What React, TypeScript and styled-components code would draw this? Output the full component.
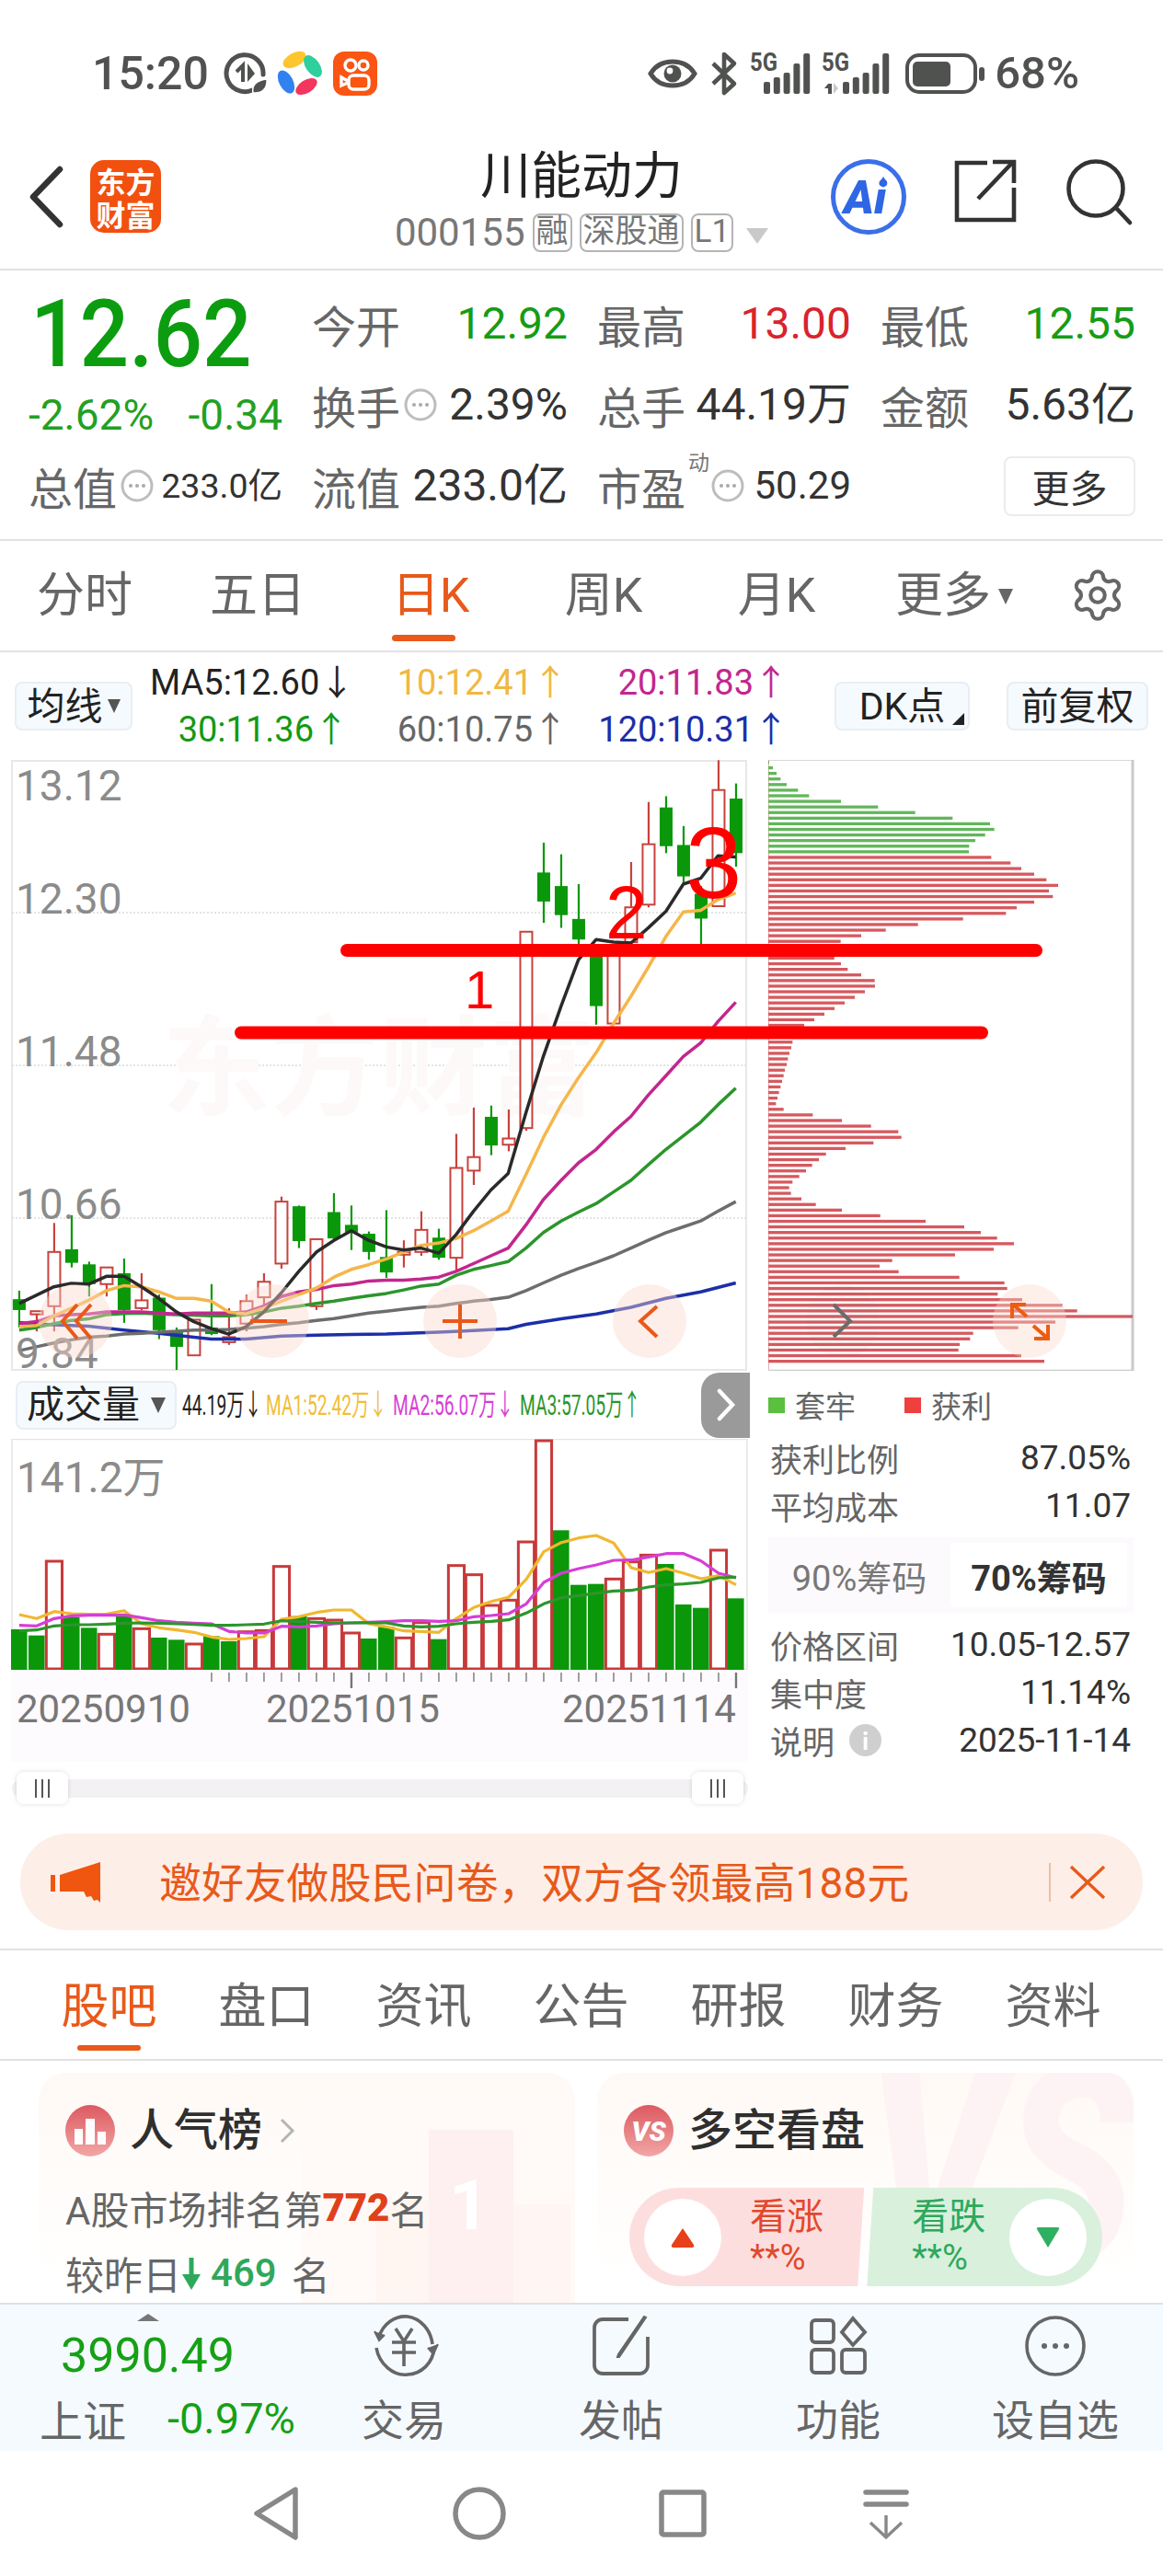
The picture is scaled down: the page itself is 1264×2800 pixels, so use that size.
import React from "react";
import styled, { createGlobalStyle } from "styled-components";
import { Settings } from "lucide-react";

const Global = createGlobalStyle`
  html, body { margin: 0; padding: 0; background: #fff; }
  body { font-family: Roboto, "Noto Sans CJK SC", sans-serif; }
  * { box-sizing: border-box; }
`;

const ORANGE = "#e8591a";
const GRAY = "#666";
const DARK = "#333";
const UP = "#d9232e";

const Page = styled.div`
  width: 1264px;
  height: 2800px;
  overflow: hidden;
  display: flex;
  flex-direction: column;
  background: #fff;
`;

const Glyph = styled.svg<{ $ml?: number; $mt?: number }>`
  display: block;
  flex: none;
  overflow: visible;
  margin-left: ${(p) => p.$ml ?? 0}px;
  margin-top: ${(p) => p.$mt ?? 0}px;
`;

/* status bar */
const StatusBar = styled.div`
  height: 160px;
  display: flex;
  align-items: center;
  padding: 0 91px 0 100px;
  color: #505250;
`;
const Clock = styled.span`
  font-size: 50px;
  font-weight: 500;
  line-height: 60px;
  margin-right: 17px;
`;
const StatusRight = styled.div`
  margin-left: auto;
  display: flex;
  align-items: center;
`;
const Percent = styled.span`
  font-size: 49px;
  font-weight: 500;
  line-height: 60px;
  margin-left: 9px;
`;

/* header */
const Header = styled.div`
  height: 134px;
  display: grid;
  grid-template-columns: 1fr auto 1fr;
  border-bottom: 2px solid #e2e2e2;
`;
const HeaderLeft = styled.div`
  display: flex;
  align-items: flex-start;
  padding: 14px 0 0 32px;
  gap: 30px;
`;
const HeaderRight = styled.div`
  display: flex;
  justify-content: flex-end;
  align-items: flex-start;
  padding: 12px 34px 0 0;
`;
const Logo = styled.div`
  width: 77px;
  height: 79px;
  border-radius: 15px;
  background: #f2500f;
  color: #fff;
  font-size: 32px;
  line-height: 36px;
  font-weight: 700;
  display: flex;
  flex-direction: column;
  align-items: center;
  justify-content: center;
  font-family: "Noto Sans CJK SC", sans-serif;
`;
const TitleCol = styled.div`
  display: flex;
  flex-direction: column;
  align-items: center;
`;
const Title = styled.div`
  font-size: 55px;
  line-height: 52px;
  color: #222;
  font-family: "Noto Sans CJK SC", sans-serif;
  font-weight: 400;
`;
const CodeRow = styled.div`
  margin-top: 20px;
  display: flex;
  align-items: center;
  gap: 8px;
  color: #777;
`;
const Code = styled.span`
  font-size: 42px;
  line-height: 42px;
`;
const Badge = styled.span`
  height: 42px;
  border: 2px solid #b4b4b4;
  border-radius: 8px;
  padding: 0 2px;
  font-size: 35px;
  line-height: 36px;
  color: #777;
  white-space: nowrap;
  font-family: Roboto, "Noto Sans CJK SC", sans-serif;
`;
const CodeArrow = styled.span`
  width: 0;
  height: 0;
  margin: 6px 0 0 6px;
  border-left: 12px solid transparent;
  border-right: 12px solid transparent;
  border-top: 17px solid #c9c9c9;
`;
const IconSlot = styled.div<{ $gap: number }>`
  margin-left: ${(p) => p.$gap}px;
  display: flex;
`;

/* quote grid */
const Quote = styled.div`
  display: grid;
  grid-template-columns: 276px 278px 276px 277px;
  grid-template-rows: repeat(3, 88px);
  column-gap: 32px;
  padding: 14px 30px 14px 31px;
  border-bottom: 2px solid #e2e2e2;
`;
const PriceCol = styled.div`
  grid-row: 1 / 3;
  grid-column: 1;
  display: flex;
  flex-direction: column;
`;
const Price = styled.div`
  height: 110px;
  font-size: 102px;
  line-height: 110px;
  font-weight: 500;
  color: #0b9d0f;
  margin-left: 2px;
  transform: scaleX(0.925);
  transform-origin: left center;
  white-space: nowrap;
`;
const ChangeRow = styled.div`
  height: 72px;
  display: flex;
  justify-content: space-between;
  align-items: center;
  font-size: 46px;
  color: #22a022;
`;
const Metric = styled.div`
  display: flex;
  justify-content: space-between;
  align-items: center;
  height: 88px;
  white-space: nowrap;
`;
const Label = styled.span`
  font-size: 48px;
  line-height: 60px;
  color: ${GRAY};
  font-family: "Noto Sans CJK SC", sans-serif;
`;
const LabelGroup = styled.span<{ $gap?: number }>`
  display: flex;
  align-items: center;
  gap: ${(p) => p.$gap ?? 4}px;
`;
const Value = styled.span<{ $color?: string; $size?: number }>`
  font-size: ${(p) => p.$size ?? 48}px;
  line-height: 60px;
  color: ${(p) => p.$color ?? DARK};
`;
const Sup = styled.span`
  font-size: 23px;
  line-height: 24px;
  color: #777;
  align-self: flex-start;
  margin: -6px 2px 0 3px;
`;
const MoreCell = styled.div`
  display: flex;
  justify-content: flex-end;
  align-items: center;
  height: 88px;
`;
const MoreBtn = styled.div`
  width: 143px;
  height: 65px;
  border: 2px solid #ececec;
  border-radius: 8px;
  font-size: 41px;
  line-height: 60px;
  text-align: center;
  color: ${DARK};
  font-family: "Noto Sans CJK SC", sans-serif;
`;

/* period tabs */
const PeriodBar = styled.div`
  height: 121px;
  display: grid;
  grid-template-columns: repeat(6, 188px) auto;
  margin-left: -2px;
  border-bottom: 2px solid #e2e2e2;
`;
const PeriodItem = styled.div`
  display: flex;
  justify-content: center;
`;
const PeriodInner = styled.div<{ $active?: boolean }>`
  display: flex;
  flex-direction: column;
  padding-top: 30px;
  font-size: 52px;
  line-height: 60px;
  color: ${(p) => (p.$active ? ORANGE : GRAY)};
  font-family: Roboto, "Noto Sans CJK SC", sans-serif;
`;
const PeriodMore = styled(PeriodInner)`
  flex-direction: row;
  align-items: flex-start;
  gap: 8px;
  margin-left: 10px;
`;
const PeriodLine = styled.div`
  width: 69px;
  height: 7px;
  margin-top: 12px;
  background: ${ORANGE};
  border-radius: 4px;
`;
const TinyDown = styled.span<{ $color?: string; $size?: number; $mt?: number }>`
  width: 0;
  height: 0;
  margin-top: ${(p) => p.$mt ?? 0}px;
  border-left: ${(p) => (p.$size ?? 16) / 2}px solid transparent;
  border-right: ${(p) => (p.$size ?? 16) / 2}px solid transparent;
  border-top: ${(p) => (p.$size ?? 16) * 1.1}px solid ${(p) => p.$color ?? "#666"};
`;
const GearSlot = styled.div`
  padding: 28px 0 0 36px;
  color: #666;
`;

/* MA row */
const MaRow = styled.div`
  height: 117px;
  display: flex;
  align-items: center;
  padding-left: 16px;
`;
const ToolBtn = styled.div<{ $w: number; $ml?: number }>`
  width: ${(p) => p.$w}px;
  height: 53px;
  margin-left: ${(p) => p.$ml ?? 0}px;
  background: #f5faff;
  border: 2px solid #e8eef3;
  border-radius: 8px;
  display: flex;
  align-items: center;
  justify-content: center;
  gap: 5px;
  font-size: 41px;
  line-height: 50px;
  color: #222;
  white-space: nowrap;
  font-family: Roboto, "Noto Sans CJK SC", sans-serif;
  position: relative;
`;
const CornerMark = styled.span`
  position: absolute;
  right: 4px;
  bottom: 4px;
  width: 0;
  height: 0;
  border-left: 13px solid transparent;
  border-bottom: 13px solid #222;
`;
const MaGrid = styled.div`
  margin-left: 19px;
  display: grid;
  grid-template-columns: 216px 238px 240px;
  grid-auto-rows: 51px;
`;
const MaItem = styled.span<{ $color: string }>`
  font-size: 38px;
  line-height: 51px;
  text-align: right;
  white-space: nowrap;
  color: ${(p) => p.$color};
`;

/* charts */
const ChartRow = styled.div`
  height: 664px;
  position: relative;
  display: flex;
  padding-left: 12px;
`;
const ChartSvg = styled.svg`
  display: block;
  flex: none;
`;
const Overlay = styled.svg`
  position: absolute;
  left: 0;
  top: 0;
  pointer-events: none;
`;
const ProfileSlot = styled.div`
  margin-left: 23px;
`;

const LowerRow = styled.div`
  height: 503px;
  flex: none;
  display: flex;
  padding-left: 12px;
`;
const LowerLeft = styled.div`
  width: 801px;
  display: flex;
  flex-direction: column;
`;
const VolHead = styled.div`
  height: 74px;
  display: flex;
  align-items: center;
  padding-left: 5px;
`;
const VolBtn = styled(ToolBtn)`
  font-size: 41px;
  gap: 12px;
`;
const VolLegend = styled.div`
  display: flex;
  gap: 9px;
  margin-left: 6px;
`;
const VolLegendItem = styled.div<{ $w: number; $color: string }>`
  width: ${(p) => p.$w}px;
  height: 40px;
  font-size: 32px;
  line-height: 40px;
  white-space: nowrap;
  transform: scaleX(0.6);
  transform-origin: left center;
  color: ${(p) => p.$color};
`;
const FoldTab = styled.div`
  margin-left: auto;
  margin-right: -2px;
  width: 53px;
  height: 71px;
  background: #9a9a9a;
  border-radius: 20px 0 0 20px;
  display: flex;
  align-items: center;
  justify-content: center;
`;
const ChartSlot = styled.div`
  position: relative;
  height: 251px;
`;
const VolMax = styled.span`
  position: absolute;
  left: 6px;
  top: 20px;
  font-size: 46px;
  line-height: 44px;
  color: #8b8b8b;
`;
const AxisArea = styled.div`
  height: 100px;
  background: #fdfbfe;
  display: flex;
  flex-direction: column;
`;
const DateRow = styled.div`
  display: grid;
  grid-template-columns: 271px 322px auto;
  padding-left: 6px;
  margin-top: 8px;
  font-size: 42px;
  line-height: 30px;
  color: #777;
`;
const SliderTrack = styled.div`
  position: relative;
  height: 20px;
  margin: 19px 0 0 1px;
  background: #f3f1f4;
  border-radius: 10px;
`;
const SliderHandle = styled.div<{ $side: "left" | "right" }>`
  position: absolute;
  top: -8px;
  ${(p) => p.$side}: 5px;
  width: 56px;
  height: 35px;
  background: #fff;
  border-radius: 8px;
  box-shadow: 0 0 5px rgba(0, 0, 0, 0.14);
  display: flex;
  align-items: center;
  justify-content: center;
  gap: 5px;
`;
const HandleBar = styled.span`
  width: 2px;
  height: 20px;
  background: #555;
`;

/* stats */
const Stats = styled.div`
  margin-left: 22px;
  width: 397px;
  display: flex;
  flex-direction: column;
`;
const StatLegend = styled.div`
  height: 68px;
  padding-top: 6px;
  display: flex;
  align-items: center;
  font-size: 33px;
  color: ${GRAY};
  font-family: "Noto Sans CJK SC", sans-serif;
`;
const LegendSwatch = styled.span<{ $color: string; $ml?: number }>`
  width: 18px;
  height: 17px;
  margin: 0 11px 0 ${(p) => p.$ml ?? 0}px;
  background: ${(p) => p.$color};
`;
const StatRow = styled.div`
  height: 52px;
  display: flex;
  justify-content: space-between;
  align-items: center;
  padding: 0 3px 0 2px;
`;
const StatLabel = styled.span`
  display: flex;
  align-items: center;
  gap: 16px;
  font-size: 35px;
  color: ${GRAY};
  font-family: "Noto Sans CJK SC", sans-serif;
`;
const StatValue = styled.span`
  font-size: 37px;
  color: ${DARK};
`;
const InfoDot = styled.span`
  width: 35px;
  height: 35px;
  border-radius: 50%;
  background: #cfcfcf;
  color: #fff;
  font-size: 25px;
  line-height: 35px;
  font-weight: 700;
  text-align: center;
`;
const Toggle = styled.div`
  height: 82px;
  margin: 9px 0 8px;
  padding: 6px 7px 6px 0;
  background: #fdfafd;
  display: grid;
  grid-template-columns: 198px 1fr;
`;
const ToggleItem = styled.div<{ $on?: boolean }>`
  display: flex;
  align-items: center;
  justify-content: center;
  font-size: 38px;
  border-radius: 4px;
  background: ${(p) => (p.$on ? "#fff" : "transparent")};
  color: ${(p) => (p.$on ? DARK : "#777")};
  font-weight: ${(p) => (p.$on ? 700 : 400)};
`;

/* banner */
const Banner = styled.div`
  height: 105px;
  margin: 0 22px;
  border-radius: 52px;
  background: #fdeee8;
  display: flex;
  align-items: center;
  padding-left: 33px;
  flex: none;
`;
const BannerText = styled.span`
  margin-left: 64px;
  padding-bottom: 5px;
  font-size: 46px;
  color: ${ORANGE};
  width: 967px;
  white-space: nowrap;
  letter-spacing: 0.1px;
`;
const BannerRule = styled.span`
  width: 2px;
  height: 42px;
  background: #e9bfa8;
  margin-right: 21px;
`;

/* F10 tabs */
const SectionTabs = styled.div`
  margin-top: 20px;
  height: 122px;
  flex: none;
  display: grid;
  grid-template-columns: repeat(7, 171px);
  padding-left: 33px;
  border-top: 2px solid #e2e2e2;
  border-bottom: 2px solid #e2e2e2;
`;
const SectionTab = styled.div<{ $active?: boolean }>`
  display: flex;
  flex-direction: column;
  align-items: center;
  padding-top: 27px;
  font-size: 52px;
  line-height: 60px;
  color: ${(p) => (p.$active ? ORANGE : GRAY)};
  font-family: "Noto Sans CJK SC", sans-serif;
`;
const SectionLine = styled.div`
  width: 69px;
  height: 6px;
  margin-top: 16px;
  background: ${ORANGE};
  border-radius: 3px;
`;

/* cards */
const Cards = styled.div`
  height: 263px;
  flex: none;
  overflow: hidden;
  display: flex;
  gap: 24px;
  padding: 13px 32px 0 42px;
`;
const Card = styled.div`
  position: relative;
  width: 583px;
  height: 300px;
  border-radius: 30px 30px 0 0;
  overflow: hidden;
  background: linear-gradient(#fff9f5, #fff 75%);
  padding: 35px 0 0 29px;
  font-family: Roboto, "Noto Sans CJK SC", sans-serif;
`;
const CardMark = styled.svg`
  position: absolute;
  left: 0;
  top: 0;
`;
const VsMark = styled.span`
  position: absolute;
  left: 292px;
  top: -58px;
  font-size: 300px;
  line-height: 320px;
  font-weight: 900;
  font-style: italic;
  color: #fef3f4;
  transform: scaleX(0.78);
  transform-origin: left top;
`;
const CardHead = styled.div`
  position: relative;
  display: flex;
  align-items: center;
  height: 56px;
  gap: 16px;
`;
const HeadIcon = styled.div`
  width: 54px;
  height: 56px;
  border-radius: 50%;
  background: linear-gradient(#dc5a60, #f2a6a6);
  color: #fff;
  display: flex;
  align-items: center;
  justify-content: center;
  font-size: 30px;
  font-weight: 900;
  font-style: italic;
  flex: none;
`;
const CardTitle = styled.span`
  font-size: 48px;
  font-weight: 500;
  line-height: 56px;
  color: #2f2f2f;
`;
const CardLine = styled.div<{ $mt: number }>`
  position: relative;
  display: flex;
  align-items: center;
  margin-top: ${(p) => p.$mt}px;
  height: 58px;
  font-size: 42px;
  color: ${GRAY};
  white-space: nowrap;
`;
const Strong = styled.b<{ $color: string; $mx?: number }>`
  color: ${(p) => p.$color};
  margin: 0 ${(p) => p.$mx ?? 0}px;
  font-weight: ${(p) => (p.$mx ? 500 : 900)};
`;
const LastWord = styled.span`
  margin-left: 6px;
`;
const VotePill = styled.div`
  position: relative;
  margin: 34px 0 0 6px;
  width: 514px;
  height: 107px;
  border-radius: 54px;
  overflow: hidden;
  display: flex;
  gap: 3px;
`;
const VoteHalf = styled.div<{ $up?: boolean }>`
  width: 258px;
  height: 107px;
  display: flex;
  align-items: center;
  background: ${(p) => (p.$up ? "#fddede" : "#d9f0dd")};
  color: ${(p) => (p.$up ? "#e0492c" : "#2fa85c")};
  padding: ${(p) => (p.$up ? "0 0 0 16px" : "0 17px 0 49px")};
  clip-path: ${(p) =>
    p.$up
      ? "polygon(0 0, 100% 0, calc(100% - 7px) 100%, 0 100%)"
      : "polygon(7px 0, 100% 0, 100% 100%, 0 100%)"};
  justify-content: ${(p) => (p.$up ? "flex-start" : "space-between")};
`;
const VoteCircle = styled.div`
  width: 84px;
  height: 84px;
  border-radius: 50%;
  background: #fff;
  display: flex;
  align-items: center;
  justify-content: center;
  flex: none;
`;
const VoteText = styled.div<{ $ml?: number }>`
  margin-left: ${(p) => p.$ml ?? 0}px;
  display: flex;
  flex-direction: column;
`;
const VoteTitle = styled.span`
  font-size: 40px;
  line-height: 50px;
  margin-top: -6px;
`;
const VotePct = styled.span`
  font-size: 38px;
  line-height: 38px;
`;

/* bottom bar */
const BottomBar = styled.div`
  height: 161px;
  flex: none;
  background: #f5faff;
  border-top: 2px solid #d9e2ea;
  display: grid;
  grid-template-columns: 321px repeat(4, 236px);
`;
const Market = styled.div`
  display: flex;
  flex-direction: column;
  align-items: center;
  padding-top: 10px;
`;
const MarketUp = styled.span`
  width: 0;
  height: 0;
  border-left: 12px solid transparent;
  border-right: 12px solid transparent;
  border-bottom: 8px solid #777;
`;
const MarketValue = styled.div`
  font-size: 52px;
  line-height: 60px;
  margin-top: 8px;
  color: #16a016;
`;
const MarketRow = styled.div`
  align-self: stretch;
  margin: 8px 0 0 43px;
  display: flex;
  justify-content: space-between;
  align-items: center;
  line-height: 60px;
`;
const MarketName = styled.span`
  font-size: 47px;
  color: ${GRAY};
  font-family: "Noto Sans CJK SC", sans-serif;
`;
const MarketPct = styled.span`
  font-size: 47px;
  color: #16a016;
`;
const NavItem = styled.div`
  display: flex;
  flex-direction: column;
  align-items: center;
  padding-top: 11px;
  color: ${GRAY};
`;
const NavIcon = styled.div`
  height: 68px;
  display: flex;
  align-items: center;
`;
const NavLabel = styled.span`
  margin-top: 18px;
  font-size: 46px;
  line-height: 50px;
  font-family: "Noto Sans CJK SC", sans-serif;
`;

/* android keys */
const SystemBar = styled.div`
  flex: 1;
  display: flex;
  align-items: center;
  padding-left: 270px;
  gap: 161px;
`;
const KeySlot = styled.div`
  width: 60px;
  height: 60px;
  display: flex;
  align-items: center;
  justify-content: center;
`;

/* ---------- drawings ---------- */

const LoopIcon = () => (
  <Glyph width="46" height="46" viewBox="0 0 46 46" fill="none">
    <path d="M30 41A20 20 0 1 1 42 24" stroke="#505250" strokeWidth="5" strokeLinecap="round" />
    <path d="M20 32V14l-7 7" stroke="#505250" strokeWidth="4" />
    <path d="M25 12v20l8-9z" fill="#505250" />
    <path d="M31 44c-2-9 5-14 15-15 1 10-5 16-15 15z" fill="#505250" stroke="#fff" strokeWidth="1.5" />
  </Glyph>
);

const PetalIcon = () => (
  <Glyph $ml={12} width="48" height="48" viewBox="0 0 48 48">
    <ellipse cx="18" cy="9" rx="13.5" ry="7.5" transform="rotate(-28 18 9)" fill="#fdc62f" />
    <ellipse cx="38" cy="16" rx="13.5" ry="7.5" transform="rotate(55 38 16)" fill="#2fcf9e" />
    <ellipse cx="31" cy="38" rx="13" ry="7" transform="rotate(-32 31 38)" fill="#f4365f" />
    <ellipse cx="9" cy="33" rx="13.5" ry="7.5" transform="rotate(62 9 33)" fill="#2f82ef" />
  </Glyph>
);

const KuaishouIcon = () => (
  <Glyph $ml={12} width="48" height="48" viewBox="0 0 48 48">
    <rect width="48" height="48" rx="12" fill="#fb5513" />
    <g fill="none" stroke="#fff" strokeWidth="3.4">
      <circle cx="19" cy="15" r="6" />
      <circle cx="33" cy="15" r="5" />
      <rect x="17" y="26" width="22" height="15" rx="5" />
      <path d="M16 32l-7-4v9l7-3" />
    </g>
  </Glyph>
);

const EyeIcon = () => (
  <Glyph width="54" height="32" viewBox="0 0 54 32" fill="none">
    <path d="M3 16C9 6 18 3 27 3s18 3 24 13c-6 10-15 13-24 13S9 26 3 16z" stroke="#505250" strokeWidth="5" />
    <circle cx="27" cy="16" r="9.5" fill="#505250" />
    <circle cx="24" cy="13" r="3.4" fill="#fff" />
  </Glyph>
);

const BtIcon = () => (
  <Glyph $ml={15} width="28" height="46" viewBox="0 0 28 46" fill="none">
    <path d="M2 12l23 22-11 10V2l11 10L2 34" stroke="#505250" strokeWidth="4.6" strokeLinejoin="round" />
  </Glyph>
);

const SignalIcon = ({ net, ml }: { net?: boolean; ml: number }) => {
  const hs = [13, 18, 23, 33, 44];
  const start = net ? 23 : 15;
  return (
    <Glyph $ml={ml} width={net ? 72 : 66} height="46" viewBox={`0 0 ${net ? 72 : 66} 46`}>
      <text x="0" y="20" fontSize="28" fontWeight="700" fill="#505250" textLength="30" lengthAdjust="spacingAndGlyphs">
        5G
      </text>
      {net && (
        <>
          <path d="M7 34h4v11H7zM7 34l-4 5h4z" fill="#505250" />
          <path d="M13 45V33l5 6z" fill="#c9c9c9" />
        </>
      )}
      {hs.map((h, i) => (
        <rect key={i} x={start + i * 10.8} y={45 - h} width="7" height={h} rx="2" fill="#505250" />
      ))}
    </Glyph>
  );
};

const BatteryIcon = () => (
  <Glyph $ml={19} width="88" height="44" viewBox="0 0 88 44">
    <rect x="2" y="2" width="74" height="40" rx="13" fill="none" stroke="#505250" strokeWidth="4" />
    <rect x="8" y="9" width="41" height="27" rx="5" fill="#505250" />
    <rect x="80" y="15" width="6" height="15" rx="3" fill="#505250" />
  </Glyph>
);

const BackIcon = () => (
  <Glyph $mt={7} width="36" height="66" viewBox="0 0 36 66" fill="none">
    <path d="M33 3L4 33l29 30" stroke="#333" strokeWidth="6.5" strokeLinecap="round" strokeLinejoin="round" />
  </Glyph>
);

const AiIcon = () => (
  <Glyph width="84" height="84" viewBox="0 0 84 84">
    <circle cx="42" cy="42" r="38.5" fill="none" stroke="#3a6fe8" strokeWidth="5" />
    <text x="15" y="60" fontSize="50" fontWeight="900" fill="#2f66e4" fontStyle="italic">
      Ai
    </text>
    <path d="M58 20l4 6-4 6-4-6z" fill="#2f66e4" />
  </Glyph>
);

const ShareIcon = () => (
  <Glyph width="68" height="70" viewBox="0 0 68 70" fill="none" stroke="#333" strokeWidth="4.6">
    <path d="M36 5H3v62h62V32" />
    <path d="M26 44L64 4M42 4h23v23" />
  </Glyph>
);

const SearchIcon = () => (
  <Glyph width="72" height="72" viewBox="0 0 72 72" fill="none" stroke="#333" strokeWidth="4.6">
    <circle cx="33" cy="33" r="29.5" />
    <path d="M55 54l15 16" strokeLinecap="round" />
  </Glyph>
);

const DotCircle = () => (
  <Glyph width="36" height="36" viewBox="0 0 36 36" fill="none">
    <circle cx="18" cy="18" r="16" stroke="#bdbdbd" strokeWidth="3" />
    <circle cx="11" cy="18" r="2" fill="#a9a9a9" />
    <circle cx="18" cy="18" r="2" fill="#a9a9a9" />
    <circle cx="25" cy="18" r="2" fill="#a9a9a9" />
  </Glyph>
);

const MegaphoneIcon = () => (
  <Glyph width="54" height="44" viewBox="0 0 54 44" fill="#f0560f">
    <rect x="0" y="14" width="5" height="18" />
    <path d="M10 14L54 0v44l-3-3-4 1-3-5-5 1-3-6H10z" />
  </Glyph>
);

const CloseIcon = () => (
  <Glyph width="38" height="36" viewBox="0 0 38 36" fill="none" stroke="#e8591a" strokeWidth="3.4">
    <path d="M1 1l36 34M37 1L1 35" />
  </Glyph>
);

const TradeIcon = () => (
  <Glyph width="78" height="68" viewBox="0 0 78 68" fill="none" stroke="#666" strokeWidth="3.6">
    <path d="M12 24A30 32 0 0 1 43 2c14 2 25 14 27 30" />
    <path d="M72 36a30 32 0 0 1-29 29C27 67 12 53 9 36" />
    <path d="M7 18l5 10 6-6M76 32l-5 11-6-7" fill="#666" strokeWidth="2" />
    <path d="M30 15l9 14 9-14M26 30h26M26 41h26M39 29v27" />
  </Glyph>
);

const PostIcon = () => (
  <Glyph width="64" height="64" viewBox="0 0 64 64" fill="none" stroke="#666" strokeWidth="3.8">
    <path d="M40 3H12a9 9 0 0 0-9 9v41a9 9 0 0 0 9 9h40a9 9 0 0 0 9-9V22" />
    <path d="M59 1L30 44l-2 0 1-3L57 0z" fill="#666" strokeWidth="2" />
  </Glyph>
);

const FuncIcon = () => (
  <Glyph width="62" height="62" viewBox="0 0 62 62" fill="none" stroke="#666" strokeWidth="3.8">
    <rect x="2" y="3" width="24" height="24" rx="4" />
    <rect x="2" y="35" width="24" height="25" rx="4" />
    <rect x="35" y="35" width="25" height="25" rx="4" />
    <path d="M47 1l13 15-13 14-12-14z" />
  </Glyph>
);

const MoreIcon = () => (
  <Glyph width="66" height="66" viewBox="0 0 66 66" fill="none">
    <circle cx="33" cy="33" r="31" stroke="#666" strokeWidth="3.6" />
    <circle cx="21" cy="33" r="3" fill="#666" />
    <circle cx="33" cy="33" r="3" fill="#666" />
    <circle cx="45" cy="33" r="3" fill="#666" />
  </Glyph>
);

/* ---------- chart data (sampled from the picture) ---------- */

const cx = (i: number) => (40 + 36.33 * i) / 1.912;
const px = (X: number) => X / 1.912;
const py = (Y: number) => 820 + Y / 2.376;
const vy = (Y: number) => 1480 + Y / 3;

type Candle = [0 | 1, number, number, number, number];
const candles: Candle[] = [
  [0, 1385, 1407, 1435, 1480], [1, 1438, 1438, 1446, 1490], [1, 1210, 1285, 1425, 1490],
  [0, 1190, 1278, 1313, 1325], [0, 1310, 1317, 1368, 1400], [1, 1325, 1325, 1368, 1400],
  [0, 1302, 1340, 1435, 1468], [1, 1340, 1410, 1430, 1435], [0, 1395, 1403, 1487, 1510],
  [0, 1480, 1490, 1530, 1590], [1, 1460, 1460, 1552, 1552], [0, 1368, 1480, 1497, 1500],
  [1, 1430, 1505, 1518, 1525], [1, 1395, 1412, 1470, 1490], [1, 1340, 1362, 1402, 1430],
  [1, 1142, 1155, 1315, 1328], [0, 1165, 1167, 1257, 1275], [1, 1250, 1252, 1425, 1435],
  [0, 1133, 1182, 1250, 1255], [0, 1165, 1215, 1235, 1280], [0, 1232, 1238, 1285, 1305],
  [0, 1177, 1298, 1338, 1352], [1, 1255, 1285, 1292, 1325], [1, 1180, 1228, 1285, 1295],
  [0, 1225, 1248, 1300, 1305], [1, 980, 1068, 1300, 1335], [1, 912, 1040, 1075, 1112],
  [0, 907, 936, 1010, 1035], [1, 917, 992, 1008, 1025], [1, 458, 458, 965, 972],
  [0, 228, 305, 380, 435], [0, 258, 340, 415, 448], [0, 335, 425, 478, 500],
  [0, 490, 520, 650, 698], [1, 500, 500, 695, 695], [1, 278, 395, 485, 490],
  [1, 123, 232, 388, 395], [0, 108, 137, 237, 255], [0, 185, 234, 315, 335],
  [0, 340, 360, 424, 490], [1, 15, 92, 392, 392], [0, 75, 114, 255, 290],
];

const maRaw: { color: string; pts: number[][] }[] = [
  { color: "#1c2fa8", pts: [[40,1468],[112,1473],[184,1477],[258,1487],[330,1495],[403,1505],[439,1510],[511,1510],[585,1502],[658,1500],[730,1498],[803,1497],[912,1492],[984,1488],[1056,1483],[1093,1472],[1166,1458],[1239,1445],[1311,1428],[1384,1405],[1456,1388],[1529,1365]] },
  { color: "#6d6d6d", pts: [[40,1540],[76,1530],[112,1520],[148,1512],[184,1505],[221,1502],[258,1497],[294,1495],[330,1492],[367,1490],[403,1487],[439,1487],[475,1485],[511,1482],[548,1478],[585,1472],[621,1468],[658,1462],[694,1457],[730,1450],[766,1443],[803,1438],[839,1433],[875,1428],[912,1425],[948,1418],[984,1412],[1020,1408],[1056,1402],[1093,1385],[1129,1365],[1166,1345],[1202,1328],[1239,1312],[1275,1295],[1311,1275],[1347,1255],[1384,1235],[1420,1220],[1456,1205],[1492,1180],[1529,1155]] },
  { color: "#2c952c", pts: [[40,1487],[76,1480],[112,1470],[148,1462],[184,1458],[221,1447],[258,1444],[294,1443],[330,1445],[367,1447],[403,1448],[439,1450],[475,1450],[511,1447],[548,1440],[585,1430],[621,1425],[658,1418],[694,1412],[730,1405],[766,1398],[803,1392],[839,1383],[875,1373],[912,1368],[948,1345],[984,1330],[1020,1320],[1056,1310],[1093,1275],[1129,1235],[1166,1205],[1202,1182],[1239,1160],[1275,1130],[1311,1100],[1347,1060],[1384,1020],[1420,985],[1456,950],[1492,905],[1529,862]] },
  { color: "#c2278e", pts: [[40,1470],[76,1465],[112,1450],[148,1447],[184,1445],[221,1440],[258,1440],[294,1440],[330,1443],[367,1445],[403,1443],[439,1443],[475,1443],[511,1440],[548,1425],[585,1400],[621,1388],[658,1382],[694,1372],[730,1368],[766,1360],[803,1358],[839,1358],[875,1355],[912,1350],[948,1335],[984,1315],[1020,1295],[1056,1275],[1093,1215],[1129,1150],[1166,1100],[1202,1055],[1239,1020],[1275,975],[1311,935],[1347,880],[1384,830],[1420,780],[1456,745],[1492,690],[1529,640]] },
  { color: "#f5b64a", pts: [[40,1478],[76,1475],[112,1450],[148,1430],[184,1410],[221,1385],[258,1372],[294,1375],[330,1388],[367,1405],[403,1405],[439,1412],[475,1440],[511,1445],[548,1430],[585,1412],[621,1395],[658,1378],[694,1350],[730,1330],[766,1318],[803,1303],[839,1285],[875,1268],[912,1262],[948,1250],[984,1230],[1020,1205],[1056,1180],[1093,1085],[1129,990],[1166,905],[1202,835],[1239,770],[1275,695],[1311,625],[1347,550],[1384,470],[1420,407],[1456,403],[1492,375],[1529,358]] },
  { color: "#2a2a2a", pts: [[40,1418],[112,1375],[148,1366],[184,1368],[221,1348],[258,1348],[294,1375],[330,1405],[367,1440],[403,1465],[439,1483],[475,1497],[511,1478],[548,1440],[585,1390],[621,1335],[658,1285],[694,1255],[730,1230],[766,1255],[803,1272],[839,1280],[875,1275],[912,1288],[948,1240],[984,1180],[1020,1125],[1056,1082],[1093,925],[1129,780],[1166,650],[1202,530],[1239,478],[1275,485],[1311,487],[1347,448],[1384,405],[1420,335],[1456,320],[1492,262],[1529,265]] },
];

const volumes: [0 | 1, number][] = [
  [0,873],[0,893],[1,648],[0,833],[0,868],[1,886],[0,825],[1,868],[0,900],[0,907],[1,918],[0,895],[0,912],[1,878],
  [1,874],[1,665],[0,830],[1,835],[1,840],[1,882],[0,903],[0,865],[1,898],[1,848],[0,905],[1,662],[1,692],[1,792],
  [1,775],[1,585],[1,255],[0,550],[0,728],[0,725],[1,706],[1,650],[1,628],[0,660],[0,792],[0,803],[1,612],[0,772],
];

const volLines: { color: string; ys: number[] }[] = [
  { color: "#f0b830", ys: [825,838,815,822,824,823,812,855,868,875,883,898,906,903,897,840,832,818,810,810,855,865,878,880,883,838,802,782,768,710,620,590,575,567,592,672,688,675,690,708,698,728] },
  { color: "#d63ed6", ys: [860,862,838,829,827,827,826,835,845,850,853,855,880,885,885,863,865,862,855,852,850,848,845,845,847,845,832,828,822,790,720,690,675,663,648,647,637,626,626,650,690,705] },
  { color: "#2c952c", ys: [878,875,862,858,858,856,853,852,853,855,857,860,860,858,856,845,848,850,852,852,852,852,862,865,863,855,850,847,842,820,790,770,763,755,748,746,735,728,725,720,705,703] },
];

const profile = [
  48,60,72,85,105,142,178,282,403,524,646,768,782,752,720,700,699,
  772,835,870,912,952,990,960,973,912,855,820,680,533,428,348,281,270,262,260,282,304,348,392,393,360,327,294,261,228,195,162,
  140,130,124,120,114,109,105,99,95,90,85,80,75,70,95,190,285,380,469,479,388,297,233,210,188,168,146,124,113,119,153,200,285,410,558,684,738,791,846,780,654,449,408,470,668,815,824,793,873,1004,1052,1233,981,860,713,703,669,665,870,945,
];

const line = (pts: number[][]) => pts.map((p) => `${p[0].toFixed(1)},${p[1].toFixed(1)}`).join(" ");

const PriceChart = () => (
  <ChartSvg width="800" height="664" viewBox="12 826 800 664" fontFamily="Roboto, sans-serif">
    <rect x="13" y="827" width="798" height="662" fill="#fff" stroke="#e8e8e8" strokeWidth="2" />
    {[992, 1158, 1324].map((y) => (
      <line key={y} x1="13" x2="811" y1={y} y2={y} stroke="#dcdcdc" strokeWidth="1.5" strokeDasharray="2 2" />
    ))}
    <text x="176" y="1203" fontSize="118" fontWeight="700" fill="#fef9f9" fontFamily="Noto Sans CJK SC">
      东方财富
    </text>
    {candles.map(([up, wt, bt, bb, wb], i) => {
      const c = cx(i);
      const color = up ? "#c8423c" : "#0a980a";
      return (
        <g key={i}>
          <line x1={c} x2={c} y1={py(wt)} y2={Math.min(py(wb), 1489)} stroke={color} strokeWidth="2.2" />
          <rect
            x={c - (up ? 6.5 : 7)}
            y={py(bt)}
            width={up ? 13 : 14}
            height={Math.max(py(bb) - py(bt), 2)}
            fill={up ? "#fff" : color}
            stroke={up ? color : "none"}
            strokeWidth="2"
          />
        </g>
      );
    })}
    {maRaw.map((m) => (
      <polyline
        key={m.color}
        points={line(m.pts.map(([X, Y]) => [px(X), py(Y)]))}
        fill="none"
        stroke={m.color}
        strokeWidth="3.5"
        strokeLinejoin="round"
      />
    ))}
    <g fontSize="46" fill="#8b8b8b">
      <text x="17" y="870">13.12</text>
      <text x="17" y="993">12.30</text>
      <text x="17" y="1159">11.48</text>
      <text x="17" y="1325">10.66</text>
      <text x="17" y="1487">9.84</text>
    </g>
    <g fill="#fbd9cc" opacity=".42">
      <circle cx="82" cy="1436" r="40" />
      <circle cx="296" cy="1436" r="40" />
      <circle cx="500" cy="1436" r="40" />
      <circle cx="706" cy="1436" r="40" />
    </g>
    <g fill="none" stroke="#e8591a" strokeWidth="4">
      <path d="M84 1418L68 1436l16 19M99 1418L83 1436l16 19" />
      <path d="M272 1436h40" />
      <path d="M481 1436h38M500 1418v37" />
      <path d="M714 1420l-18 16 18 17" />
    </g>
  </ChartSvg>
);

const ProfileChart = () => (
  <ChartSvg width="398" height="664" viewBox="835 826 398 664">
    <rect x="835" y="826" width="396" height="664" fill="#fff" />
    <path d="M835 826H1230" stroke="#ccc" strokeWidth="1.5" />
    <path d="M1231 826V1490" stroke="#c9c9c9" strokeWidth="3" />
    <path d="M835.5 826V1490" stroke="#e3b1b1" strokeWidth="1" />
    <path d="M835 1489.5H1231" stroke="#ccc" strokeWidth="1.5" />
    {profile.map((X, i) => (
      <rect
        key={i}
        x="835"
        y={py(20 + 14.46 * i) - 1.6}
        width={Math.max((X - 45) / 3, 1)}
        height="3.3"
        fill={i < 17 ? "#62b65a" : "#d6595e"}
      />
    ))}
    <circle cx="916" cy="1436" r="40" fill="#777" opacity=".05" />
    <circle cx="1119" cy="1436" r="40" fill="#fbd9cc" opacity=".4" />
    <path d="M906 1418l18 18-18 17" fill="none" stroke="#6b6b6b" strokeWidth="4" />
    <path
      d="M1116 1431l-15-13M1100 1433v-15h15M1123 1441l15 13M1139 1440v15h-15"
      fill="none"
      stroke="#ee5c12"
      strokeWidth="4"
    />
  </ChartSvg>
);

const VolumeChart = () => (
  <ChartSvg width="801" height="251" viewBox="12 1564 801 251">
    <rect x="13" y="1564.5" width="799" height="250" fill="#fff" stroke="#e5e5e5" strokeWidth="1.5" />
    {volumes.map(([up, Y], i) => {
      const c = cx(i);
      return up ? (
        <rect
          key={i}
          x={c - 8.6}
          y={vy(Y) + 1}
          width="17.2"
          height={1815 - vy(Y) - 2}
          fill="#fff"
          stroke="#c8393a"
          strokeWidth="3"
        />
      ) : (
        <rect key={i} x={c - 9} y={vy(Y)} width="17.6" height={1815 - vy(Y)} fill="#0a980a" />
      );
    })}
    {volLines.map((l) => (
      <polyline
        key={l.color}
        points={line(l.ys.map((Y, i) => [cx(i), vy(Y)]))}
        fill="none"
        stroke={l.color}
        strokeWidth="3.2"
        strokeLinejoin="round"
      />
    ))}
  </ChartSvg>
);

const Ticks = () => (
  <ChartSvg width="801" height="20" viewBox="12 1815 801 20">
    {candles.map((_, i) =>
      i >= 11 ? (
        <line
          key={i}
          x1={cx(i)}
          x2={cx(i)}
          y1="1818"
          y2={i === 19 || i === 41 ? 1835 : 1828}
          stroke="#777"
          strokeWidth={i === 19 || i === 41 ? 2.4 : 1.4}
        />
      ) : null
    )}
  </ChartSvg>
);

const Annotations = () => (
  <Overlay width="1264" height="664" viewBox="0 826 1264 664" fontFamily="Liberation Sans, sans-serif">
    <line x1="377" x2="1126" y1="1033" y2="1033" stroke="#ff0000" strokeWidth="14" strokeLinecap="round" />
    <line x1="262" x2="1067" y1="1122.5" y2="1122.5" stroke="#ff0000" strokeWidth="14" strokeLinecap="round" />
    <text x="505" y="1096" fontSize="58" fill="#ff0000">1</text>
    <text x="658" y="1020" fontSize="82" fill="#ff0000">2</text>
    <text x="745" y="976" fontSize="110" fill="#ff0000">3</text>
  </Overlay>
);

const ma = [
  ["MA5:12.60↓", "#222"],
  ["10:12.41↑", "#f0b840"],
  ["20:11.83↑", "#c2278e"],
  ["30:11.36↑", "#149a14"],
  ["60:10.75↑", "#666"],
  ["120:10.31↑", "#1c2fa8"],
];

const periods = ["分时", "五日", "日K", "周K", "月K"];
const sections = ["股吧", "盘口", "资讯", "公告", "研报", "财务", "资料"];

export default function App() {
  return (
    <Page>
      <Global />
      <StatusBar>
        <Clock>15:20</Clock>
        <LoopIcon />
        <PetalIcon />
        <KuaishouIcon />
        <StatusRight>
          <EyeIcon />
          <BtIcon />
          <SignalIcon ml={14} />
          <SignalIcon net ml={12} />
          <BatteryIcon />
          <Percent>68%</Percent>
        </StatusRight>
      </StatusBar>

      <Header>
        <HeaderLeft>
          <BackIcon />
          <Logo>
            <span>东方</span>
            <span>财富</span>
          </Logo>
        </HeaderLeft>
        <TitleCol>
          <Title>川能动力</Title>
          <CodeRow>
            <Code>000155</Code>
            <Badge>融</Badge>
            <Badge>深股通</Badge>
            <Badge>L1</Badge>
            <CodeArrow />
          </CodeRow>
        </TitleCol>
        <HeaderRight>
          <AiIcon />
          <IconSlot $gap={51}>
            <ShareIcon />
          </IconSlot>
          <IconSlot $gap={53}>
            <SearchIcon />
          </IconSlot>
        </HeaderRight>
      </Header>

      <Quote>
        <PriceCol>
          <Price>12.62</Price>
          <ChangeRow>
            <span>-2.62%</span>
            <span>-0.34</span>
          </ChangeRow>
        </PriceCol>
        <Metric>
          <Label>今开</Label>
          <Value $color="#169c16">12.92</Value>
        </Metric>
        <Metric>
          <Label>最高</Label>
          <Value $color={UP}>13.00</Value>
        </Metric>
        <Metric>
          <Label>最低</Label>
          <Value $color="#169c16">12.55</Value>
        </Metric>
        <Metric>
          <LabelGroup>
            <Label>换手</Label>
            <DotCircle />
          </LabelGroup>
          <Value>2.39%</Value>
        </Metric>
        <Metric>
          <Label>总手</Label>
          <Value>44.19万</Value>
        </Metric>
        <Metric>
          <Label>金额</Label>
          <Value>5.63亿</Value>
        </Metric>
        <Metric>
          <LabelGroup>
            <Label>总值</Label>
            <DotCircle />
          </LabelGroup>
          <Value $size={37.5}>233.0亿</Value>
        </Metric>
        <Metric>
          <Label>流值</Label>
          <Value>233.0亿</Value>
        </Metric>
        <Metric>
          <LabelGroup $gap={0}>
            <Label>市盈</Label>
            <Sup>动</Sup>
            <DotCircle />
          </LabelGroup>
          <Value $size={42}>50.29</Value>
        </Metric>
        <MoreCell>
          <MoreBtn>更多</MoreBtn>
        </MoreCell>
      </Quote>

      <PeriodBar>
        {periods.map((p) => (
          <PeriodItem key={p}>
            <PeriodInner $active={p === "日K"}>
              {p}
              {p === "日K" && <PeriodLine />}
            </PeriodInner>
          </PeriodItem>
        ))}
        <PeriodItem>
          <PeriodMore>
            更多
            <TinyDown $mt={22} />
          </PeriodMore>
        </PeriodItem>
        <GearSlot>
          <Settings size={62} strokeWidth={1.6} />
        </GearSlot>
      </PeriodBar>

      <MaRow>
        <ToolBtn $w={128}>
          均线
          <TinyDown $color="#555" $size={14} />
        </ToolBtn>
        <MaGrid>
          {ma.map(([t, c]) => (
            <MaItem key={t} $color={c}>
              {t}
            </MaItem>
          ))}
        </MaGrid>
        <ToolBtn $w={147} $ml={50}>
          DK点
          <CornerMark />
        </ToolBtn>
        <ToolBtn $w={154} $ml={40}>
          前复权
        </ToolBtn>
      </MaRow>

      <ChartRow>
        <PriceChart />
        <ProfileSlot>
          <ProfileChart />
        </ProfileSlot>
        <Annotations />
      </ChartRow>

      <LowerRow>
        <LowerLeft>
          <VolHead>
            <VolBtn $w={175}>
              成交量
              <TinyDown $color="#555" $size={16} />
            </VolBtn>
            <VolLegend>
              <VolLegendItem $w={82} $color="#222">44.19万↓</VolLegendItem>
              <VolLegendItem $w={129} $color="#f0be3a">MA1:52.42万↓</VolLegendItem>
              <VolLegendItem $w={129} $color="#d63ed6">MA2:56.07万↓</VolLegendItem>
              <VolLegendItem $w={130} $color="#2c952c">MA3:57.05万↑</VolLegendItem>
            </VolLegend>
            <FoldTab>
              <Glyph width="20" height="34" viewBox="0 0 20 34" fill="none">
                <path d="M3 2l14 15L3 32" stroke="#fff" strokeWidth="4.5" strokeLinecap="round" />
              </Glyph>
            </FoldTab>
          </VolHead>
          <ChartSlot>
            <VolumeChart />
            <VolMax>141.2万</VolMax>
          </ChartSlot>
          <AxisArea>
            <Ticks />
            <DateRow>
              <span>20250910</span>
              <span>20251015</span>
              <span>20251114</span>
            </DateRow>
          </AxisArea>
          <SliderTrack>
            <SliderHandle $side="left">
              <HandleBar />
              <HandleBar />
              <HandleBar />
            </SliderHandle>
            <SliderHandle $side="right">
              <HandleBar />
              <HandleBar />
              <HandleBar />
            </SliderHandle>
          </SliderTrack>
        </LowerLeft>
        <Stats>
          <StatLegend>
            <LegendSwatch $color="#5bbf3f" />
            套牢
            <LegendSwatch $color="#ef4040" $ml={53} />
            获利
          </StatLegend>
          <StatRow>
            <StatLabel>获利比例</StatLabel>
            <StatValue>87.05%</StatValue>
          </StatRow>
          <StatRow>
            <StatLabel>平均成本</StatLabel>
            <StatValue>11.07</StatValue>
          </StatRow>
          <Toggle>
            <ToggleItem>90%筹码</ToggleItem>
            <ToggleItem $on>70%筹码</ToggleItem>
          </Toggle>
          <StatRow>
            <StatLabel>价格区间</StatLabel>
            <StatValue>10.05-12.57</StatValue>
          </StatRow>
          <StatRow>
            <StatLabel>集中度</StatLabel>
            <StatValue>11.14%</StatValue>
          </StatRow>
          <StatRow>
            <StatLabel>
              说明
              <InfoDot>i</InfoDot>
            </StatLabel>
            <StatValue>2025-11-14</StatValue>
          </StatRow>
        </Stats>
      </LowerRow>

      <Banner>
        <MegaphoneIcon />
        <BannerText>邀好友做股民问卷，双方各领最高188元</BannerText>
        <BannerRule />
        <CloseIcon />
      </Banner>

      <SectionTabs>
        {sections.map((s, i) => (
          <SectionTab key={s} $active={i === 0}>
            {s}
            {i === 0 && <SectionLine />}
          </SectionTab>
        ))}
      </SectionTabs>

      <Cards>
        <Card>
          <CardMark width="583" height="300" viewBox="0 0 583 300">
            <rect x="285" y="25" width="298" height="275" fill="#fffaf7" />
            <rect x="424" y="62" width="92" height="238" fill="#fef0f0" />
            <rect x="366" y="138" width="58" height="162" fill="#fff6f1" />
            <rect x="516" y="143" width="62" height="157" fill="#fff6f3" />
            <text x="446" y="170" fontSize="76" fontWeight="700" fill="#fff" fontFamily="Roboto, sans-serif">
              1
            </text>
          </CardMark>
          <CardHead>
            <HeadIcon>
              <Glyph width="34" height="30" viewBox="0 0 34 30" fill="#fff">
                <rect x="0" y="13" width="9" height="17" />
                <rect x="12" y="2" width="10" height="28" />
                <rect x="25" y="16" width="9" height="14" />
              </Glyph>
            </HeadIcon>
            <CardTitle>人气榜</CardTitle>
            <Glyph $ml={3} width="16" height="26" viewBox="0 0 16 26" fill="none">
              <path d="M2 1l12 12L2 25" stroke="#b5b5b5" strokeWidth="3" />
            </Glyph>
          </CardHead>
          <CardLine $mt={26}>
            A股市场排名第<Strong $color="#e0401c">772</Strong>名
          </CardLine>
          <CardLine $mt={13}>
            较昨日
            <Glyph $mt={4} width="22" height="36" viewBox="0 0 22 36" fill="none">
              <path d="M11 0v30" stroke="#2fa85c" strokeWidth="5" />
              <path d="M1 18h20L11 35z" fill="#2fa85c" />
            </Glyph>
            <Strong $color="#2fa85c" $mx={10}>469</Strong>
            <LastWord>名</LastWord>
          </CardLine>
        </Card>
        <Card>
          <VsMark>VS</VsMark>
          <CardHead>
            <HeadIcon>VS</HeadIcon>
            <CardTitle>多空看盘</CardTitle>
          </CardHead>
          <VotePill>
            <VoteHalf $up>
              <VoteCircle>
                <Glyph width="28" height="24" viewBox="0 0 28 24">
                  <path d="M14 2L26 20q1 3-2 3H4q-3 0-2-3z" fill="#e8401a" />
                </Glyph>
              </VoteCircle>
              <VoteText $ml={31}>
                <VoteTitle>看涨</VoteTitle>
                <VotePct>**%</VotePct>
              </VoteText>
            </VoteHalf>
            <VoteHalf>
              <VoteText>
                <VoteTitle>看跌</VoteTitle>
                <VotePct>**%</VotePct>
              </VoteText>
              <VoteCircle>
                <Glyph width="28" height="24" viewBox="0 0 28 24">
                  <path d="M14 23L26 3q1-2-2-2H4q-3 0-2 2z" fill="#2fb060" />
                </Glyph>
              </VoteCircle>
            </VoteHalf>
          </VotePill>
        </Card>
      </Cards>

      <BottomBar>
        <Market>
          <MarketUp />
          <MarketValue>3990.49</MarketValue>
          <MarketRow>
            <MarketName>上证</MarketName>
            <MarketPct>-0.97%</MarketPct>
          </MarketRow>
        </Market>
        <NavItem>
          <NavIcon><TradeIcon /></NavIcon>
          <NavLabel>交易</NavLabel>
        </NavItem>
        <NavItem>
          <NavIcon><PostIcon /></NavIcon>
          <NavLabel>发帖</NavLabel>
        </NavItem>
        <NavItem>
          <NavIcon><FuncIcon /></NavIcon>
          <NavLabel>功能</NavLabel>
        </NavItem>
        <NavItem>
          <NavIcon><MoreIcon /></NavIcon>
          <NavLabel>设自选</NavLabel>
        </NavItem>
      </BottomBar>

      <SystemBar>
        <KeySlot>
          <Glyph width="50" height="58" viewBox="0 0 50 58" fill="none" stroke="#888" strokeWidth="5.5" strokeLinejoin="round">
            <path d="M46 3L4 29l42 26z" />
          </Glyph>
        </KeySlot>
        <KeySlot>
          <Glyph width="58" height="58" viewBox="0 0 58 58" fill="none" stroke="#888" strokeWidth="5.5">
            <circle cx="29" cy="29" r="26" />
          </Glyph>
        </KeySlot>
        <KeySlot>
          <Glyph width="52" height="52" viewBox="0 0 52 52" fill="none" stroke="#888" strokeWidth="5.5" strokeLinejoin="round">
            <rect x="3" y="3" width="46" height="46" rx="2" />
          </Glyph>
        </KeySlot>
        <KeySlot>
          <Glyph width="46" height="52" viewBox="0 0 46 52" fill="none" stroke="#888">
            <path d="M1 3h44M1 16h44" strokeWidth="5.5" strokeLinecap="round" />
            <path d="M23 28v23M6 36l17 16 17-16" strokeWidth="3.4" />
          </Glyph>
        </KeySlot>
      </SystemBar>
    </Page>
  );
}
